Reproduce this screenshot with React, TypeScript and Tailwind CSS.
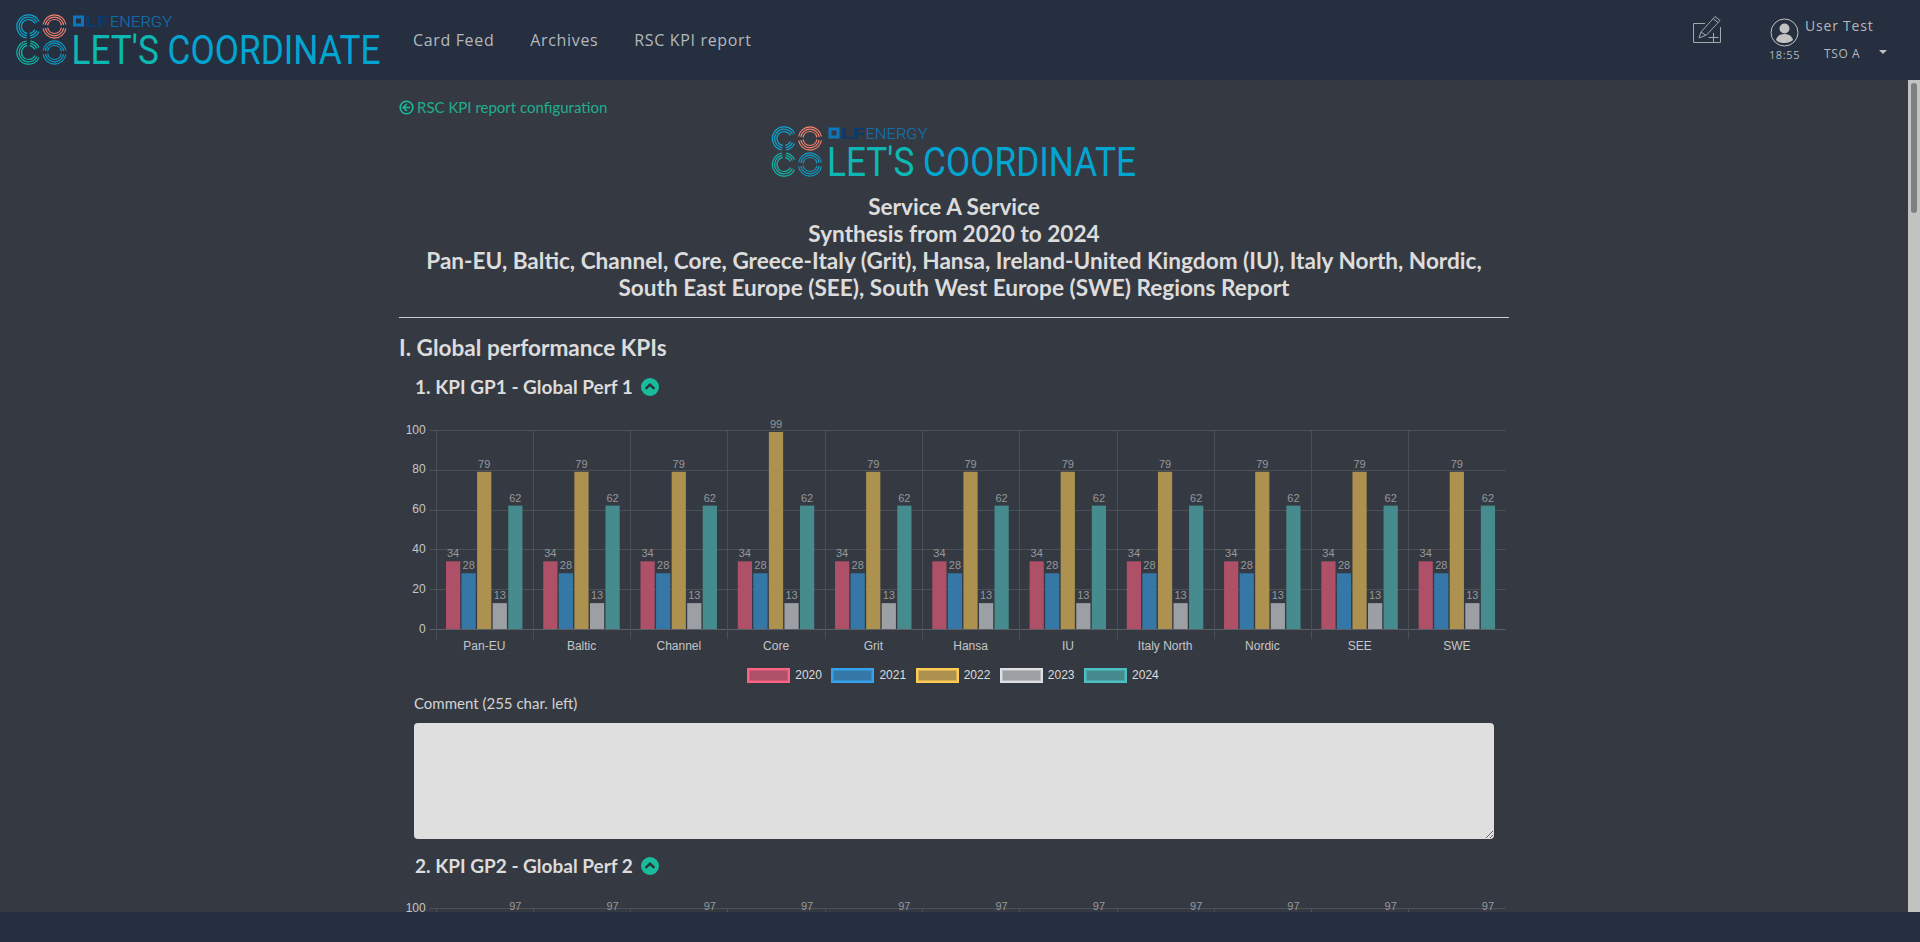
import React from 'react';

const YEARS = [
  { year: '2020', fill: '#ae5068', box: 'border-[#ff6384]', inner: 'bg-[#ae5068] border-[#cf5a77]' },
  { year: '2021', fill: '#3578a8', box: 'border-[#36a2eb]', inner: 'bg-[#3578a8] border-[#358dc9]' },
  { year: '2022', fill: '#ad924f', box: 'border-[#ffcd56]', inner: 'bg-[#ad924f] border-[#d6b052]' },
  { year: '2023', fill: '#9c9fa3', box: 'border-[#dfe0e3]', inner: 'bg-[#9c9fa3] border-[#b8babd]' },
  { year: '2024', fill: '#468b8e', box: 'border-[#4bc0c0]', inner: 'bg-[#468b8e] border-[#49a5a7]' },
];

const REGIONS = ['Pan-EU', 'Baltic', 'Channel', 'Core', 'Grit', 'Hansa', 'IU', 'Italy North', 'Nordic', 'SEE', 'SWE'];

const polar = (cx: number, cy: number, r: number, deg: number) => {
  const a = (deg * Math.PI) / 180;
  return `${(cx + r * Math.cos(a)).toFixed(2)} ${(cy + r * Math.sin(a)).toFixed(2)}`;
};

const arc = (cx: number, cy: number, r: number, from: number, to: number) =>
  `M${polar(cx, cy, r, from)}A${r} ${r} 0 ${to - from > 180 ? 1 : 0} 1 ${polar(cx, cy, r, to)}`;

const RINGS: { cx: number; cy: number; color: string; spans: number[][] }[] = [
  { cx: 12.5, cy: 12.5, color: '#0ea5cf', spans: [[100, 335], [25, 80]] },
  { cx: 38.5, cy: 12.5, color: '#f98371', spans: [[190, 350], [10, 170]] },
  { cx: 12.5, cy: 38.5, color: '#14b5a5', spans: [[25, 260], [280, 335]] },
  { cx: 38.5, cy: 38.5, color: '#0f9cc6', spans: [[190, 350], [10, 170]] },
];

const Logo = ({ width = 366 }: { width?: number }) => (
  <svg width={width} viewBox="0 0 366 52" className="block shrink-0">
    {RINGS.map((q) =>
      [11.6, 9.3, 7].map((r) =>
        q.spans.map(([from, to]) => (
          <path key={`${q.cx}-${q.cy}-${r}-${from}`} d={arc(q.cx, q.cy, r, from, to)} fill="none" stroke={q.color} strokeWidth="1.2" />
        )),
      ),
    )}
    <path d="M57 1.500h11v11h-11zM60 4.500v5h5v-5z" fill="#0b78bd" fillRule="evenodd" />
    <text x="69" y="12.5" fontFamily="Roboto, sans-serif" fontWeight="900" fontSize="15" textLength="24" lengthAdjust="spacingAndGlyphs" fill="#0b3a6b">
      LF
    </text>
    <text x="94" y="12.5" fontFamily="Roboto, sans-serif" fontWeight="300" fontSize="15.5" textLength="62" lengthAdjust="spacingAndGlyphs" fill="#0b78bd">
      ENERGY
    </text>
    <text x="55.5" y="49.5" fontFamily="Roboto, sans-serif" fontSize="40" textLength="309" lengthAdjust="spacingAndGlyphs">
      <tspan fill="#0db8b2">LET'S </tspan>
      <tspan fill="#02a5d1">COORDINATE</tspan>
    </text>
  </svg>
);

const ChevronUpBadge = () => (
  <svg width="18" height="18" viewBox="0 0 18 18" className="shrink-0">
    <circle cx="9" cy="9" r="9" fill="#18bc9c" />
    <path d="M4.600 10.800 9 6.600l4.400 4.200" fill="none" stroke="#2b3038" strokeWidth="2.400" />
  </svg>
);

const Chart = ({ rows, clip }: { rows: (region: number) => number[]; clip?: boolean }) => {
  const left = 36.7;
  const step = 97.26;
  const top = 20;
  const base = 219;
  const y = (v: number) => base - ((base - top) * v) / 100;
  const h = clip ? 60 : 247;
  return (
    <svg width="1110" height={h} viewBox={`0 0 1110 ${h}`} className="block -ml-[16px]">
      {[100, 80, 60, 40, 20, 0].map((t) => (
        <g key={t}>
          <line x1={left - 6} x2={left + step * 11} y1={Math.round(y(t)) + 0.5} y2={Math.round(y(t)) + 0.5} stroke={t === 0 ? '#5c6066' : '#4b5057'} />
          <text x={left - 10} y={y(t) + 3.5} textAnchor="end" fontFamily="'Liberation Sans', sans-serif" fontSize="12" fill="#c4c6c8">
            {t}
          </text>
        </g>
      ))}
      {REGIONS.map((name, i) => (
        <g key={name}>
          <line x1={Math.round(left + step * i) + 0.5} x2={Math.round(left + step * i) + 0.5} y1={top} y2={base + 10} stroke="#4b5057" />
          {rows(i).map((v, k) => {
            const x = left + step * i + 10.3 + k * 15.56;
            return (
              <g key={k}>
                <rect x={x} y={y(v)} width="14.2" height={base - y(v)} fill={YEARS[k].fill} />
                <text x={x + 7.1} y={y(v) - 4} textAnchor="middle" fontFamily="'Liberation Sans', sans-serif" fontSize="11" fill="#96989b">
                  {v}
                </text>
              </g>
            );
          })}
          <text x={left + step * (i + 0.5)} y={base + 21} textAnchor="middle" fontFamily="'Liberation Sans', sans-serif" fontSize="12" fill="#c4c6c8">
            {name}
          </text>
        </g>
      ))}
    </svg>
  );
};

const App = () => {
  return (
    <div className="h-screen flex flex-col bg-[#353a42] font-['Lato',sans-serif] overflow-hidden">
      {/* header */}
      <header className="h-20 shrink-0 bg-[#252f3f] flex items-center pl-4 pr-[31px] font-['Open_Sans',sans-serif] text-[#b4b8bd]">
        <Logo />
        <nav className="flex gap-9 ml-[31px] text-base tracking-[0.65px] -mt-[1px]">
          <span>Card Feed</span>
          <span>Archives</span>
          <span>RSC KPI report</span>
        </nav>
        <div className="ml-auto flex items-start">
          <svg width="30" height="30" viewBox="0 0 30 30" className="mt-[-4px] mr-[48px]" fill="none" stroke="#a4a8ad" strokeWidth="1">
            <path d="M13 9.500H1.500v19h27V13" />
            <path d="M7 24l2-6L23 2.500l5 4L14.500 21z" />
            <path d="M9 18l5 3.500M21 4.500l5 4" />
            <path d="M21.500 19v9.500M16.500 23.500h10" />
          </svg>
          <div className="flex flex-col items-center w-[29px]">
            <svg width="29" height="29" viewBox="0 0 29 29">
              <circle cx="14.500" cy="14.500" r="13.500" fill="none" stroke="#c2c2c2" strokeWidth="1" />
              <circle cx="14.500" cy="10.500" r="5" fill="#c2c2c2" />
              <path d="M6 22c1-4 4.500-6 8.500-6s7.500 2 8.500 6c-2 2-5 3-8.500 3S8 24 6 22z" fill="#c2c2c2" />
            </svg>
            <span className="text-[11px] tracking-[0.6px] leading-4">18:55</span>
          </div>
          <div className="flex flex-col ml-[6px] w-[84px] -mt-[2px]">
            <span className="text-sm tracking-[0.8px] leading-5">User Test</span>
            <div className="flex items-center mt-[10px] pl-[19px] text-xs tracking-[0.6px] leading-4">
              <span>TSO A</span>
              <span className="ml-auto mr-[2px] border-x-4 border-x-transparent border-t-4 border-t-[#c2c2c2] -mt-[3px]" />
            </div>
          </div>
        </div>
      </header>

      {/* page body */}
      <div className="flex-1 min-h-0 flex">
        <main className="flex-1 min-w-0 overflow-hidden">
          <div className="w-[1110px] mx-auto text-[#dcdcdc]">
            <a className="flex items-center gap-[3px] pt-[17px] text-[15px] leading-[21px] text-[#1fae8d]">
              <svg width="15" height="15" viewBox="0 0 15 15" fill="none" stroke="#18bc9c" strokeWidth="1.600">
                <circle cx="7.500" cy="7.500" r="6.300" />
                <path d="M7.800 4 4.300 7.500 7.800 11M4.500 7.500H11" />
              </svg>
              RSC KPI report configuration
            </a>
            <div className="flex justify-center h-[52px] mt-2">
              <Logo width={369} />
            </div>
            <h4 className="text-center text-[22.6px] leading-[27px] font-bold text-[#dcdcdc] mt-[15px] px-5">
              Service A Service
              <br />
              Synthesis from 2020 to 2024
              <br />
              Pan-EU, Baltic, Channel, Core, Greece-Italy (Grit), Hansa, Ireland-United Kingdom (IU), Italy North, Nordic, South East Europe (SEE), South West Europe (SWE) Regions Report
            </h4>
            <hr className="border-t border-[#c9cbcd] mt-4" />
            <h2 className="text-[22.6px] leading-[30px] font-bold mt-[15px]">I. Global performance KPIs</h2>

            <section className="pl-4">
              <h3 className="flex items-center gap-2 text-[19px] font-bold leading-6 mt-3">
                1. KPI GP1 - Global Perf 1 <ChevronUpBadge />
              </h3>
              <div className="mt-[11px]">
                <Chart rows={(i) => [34, 28, i === 3 ? 99 : 79, 13, 62]} />
              </div>
              <div className="flex justify-center gap-[9.5px] pr-[18px] mt-[11px] text-xs leading-[15px] text-[#dcdcdc] font-['Liberation_Sans',sans-serif]">
                {YEARS.map((item) => (
                  <div key={item.year} className="flex items-center gap-[5px]">
                    <span className={`block w-[43px] h-[15px] border-2 ${item.box}`}>
                      <span className={`block h-full border ${item.inner}`} />
                    </span>
                    {item.year}
                  </div>
                ))}
              </div>
              <label className="block text-[15px] leading-[21px] text-[#d2d2d2] mt-[10px] -ml-px">Comment (255 char. left)</label>
              <textarea className="block w-[1080px] h-[116px] mt-[9px] -ml-px rounded bg-[#dfdfdf]" />
              <h3 className="flex items-center gap-2 text-[19px] font-bold leading-6 mt-[15px]">
                2. KPI GP2 - Global Perf 2 <ChevronUpBadge />
              </h3>
              <div className="mt-[10px]">
                <Chart clip rows={() => [20, 20, 20, 20, 97]} />
              </div>
            </section>
          </div>
        </main>
        <div className="w-3 shrink-0 bg-[#c1c3c1] px-[3px] pt-[3px]">
          <div className="h-[130px] rounded-full bg-[#7c8082]" />
        </div>
      </div>

      <footer className="h-[30px] shrink-0 bg-[#252f3f]" />
    </div>
  );
};

export default App;
